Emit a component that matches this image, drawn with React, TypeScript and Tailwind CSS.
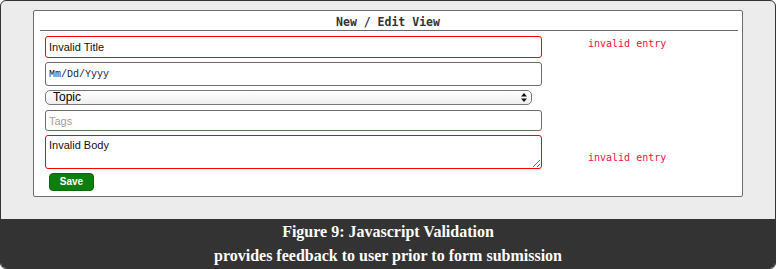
const invalidBorder = "border-[#ff0000]";

const App: React.FC = () => {
  return (
    <div className="w-[776px] h-[269px] bg-white">
      <div className="w-[776px] h-[269px] border border-[#333333] rounded-[6px] overflow-hidden flex flex-col bg-[#ececec]">
        {/* form area */}
        <div className="h-[218px] pt-[9px] px-[32px]">
          <div className="w-[710px] h-[187px] bg-white border border-[#6e6e6e] rounded-[2px] flex flex-col">
            <div className="h-[19px] pt-[4px] text-center text-[11.5px] leading-[14px] font-bold text-[#333] font-['DejaVu_Sans_Mono',monospace]">
              New / Edit View
            </div>
            <div className="h-px bg-[#6a6a6a] ml-[6px] mr-[4px]" />

            <div className="pl-[11px] pt-[5px] flex flex-col font-['Liberation_Sans',Arial,sans-serif]">
              {/* title */}
              <div className="flex items-start">
                <input
                  type="text"
                  defaultValue="Invalid Title"
                  className={`block w-[497px] h-[22px] border ${invalidBorder} rounded-[3px] px-[3px] text-[11px] text-[#111] outline-none`}
                />
                <span className="ml-[46px] mt-[2px] text-[10px] leading-[12px] text-[#f5103e] font-['DejaVu_Sans_Mono',monospace]">
                  invalid entry
                </span>
              </div>

              {/* date */}
              <input
                type="text"
                defaultValue="Mm/Dd/Yyyy"
                className="block mt-[4px] w-[497px] h-[24px] border border-[#6b6b6b] rounded-[3px] px-[3px] text-[10px] text-[#1a1a2e] font-['Liberation_Mono',monospace] outline-none"
              />

              {/* topic select */}
              <div className="mt-[4px] relative w-[487px] h-[15px]">
                <select className="block appearance-none w-full h-[15px] py-0 border border-[#777] rounded-[5px] bg-gradient-to-b from-white to-[#efefef] pl-[7px] text-[12px] leading-[13px] text-black outline-none">
                  <option>Topic</option>
                </select>
                <svg
                  className="absolute right-[5px] top-[3px] pointer-events-none"
                  width="6"
                  height="9"
                  viewBox="0 0 6 9"
                >
                  <path d="M3 0 L6 3.5 L0 3.5 Z" fill="#111" />
                  <path d="M3 9 L6 5.5 L0 5.5 Z" fill="#111" />
                </svg>
              </div>

              {/* tags */}
              <input
                type="text"
                placeholder="Tags"
                className="block mt-[5px] w-[497px] h-[21px] border border-[#6b6b6b] rounded-[3px] px-[3px] text-[11px] text-[#111] placeholder:text-[#a0a0a0] outline-none"
              />

              {/* body */}
              <div className="mt-[4px] flex items-start">
                <textarea
                  defaultValue="Invalid Body"
                  className={`block w-[497px] h-[34px] border ${invalidBorder} rounded-[3px] px-[3px] pt-[3px] text-[11px] leading-[13px] text-[#111] outline-none`}
                />
                <span className="ml-[46px] mt-[17px] text-[10px] leading-[12px] text-[#f5103e] font-['DejaVu_Sans_Mono',monospace]">
                  invalid entry
                </span>
              </div>

              <button className="mt-[4px] ml-[4px] w-[45px] h-[18px] bg-[#0b7f0b] border border-[#086a08] rounded-[4px] text-white text-[10px] font-bold leading-[16px]">
                Save
              </button>
            </div>
          </div>
        </div>

        {/* caption */}
        <div className="flex-1 bg-[#333333] pt-[1px] text-center text-white font-bold text-[16px] leading-[24px] font-['Liberation_Serif','Times_New_Roman',serif]">
          <div>Figure 9: Javascript Validation</div>
          <div>provides feedback to user prior to form submission</div>
        </div>
      </div>
    </div>
  );
};

export default App;
